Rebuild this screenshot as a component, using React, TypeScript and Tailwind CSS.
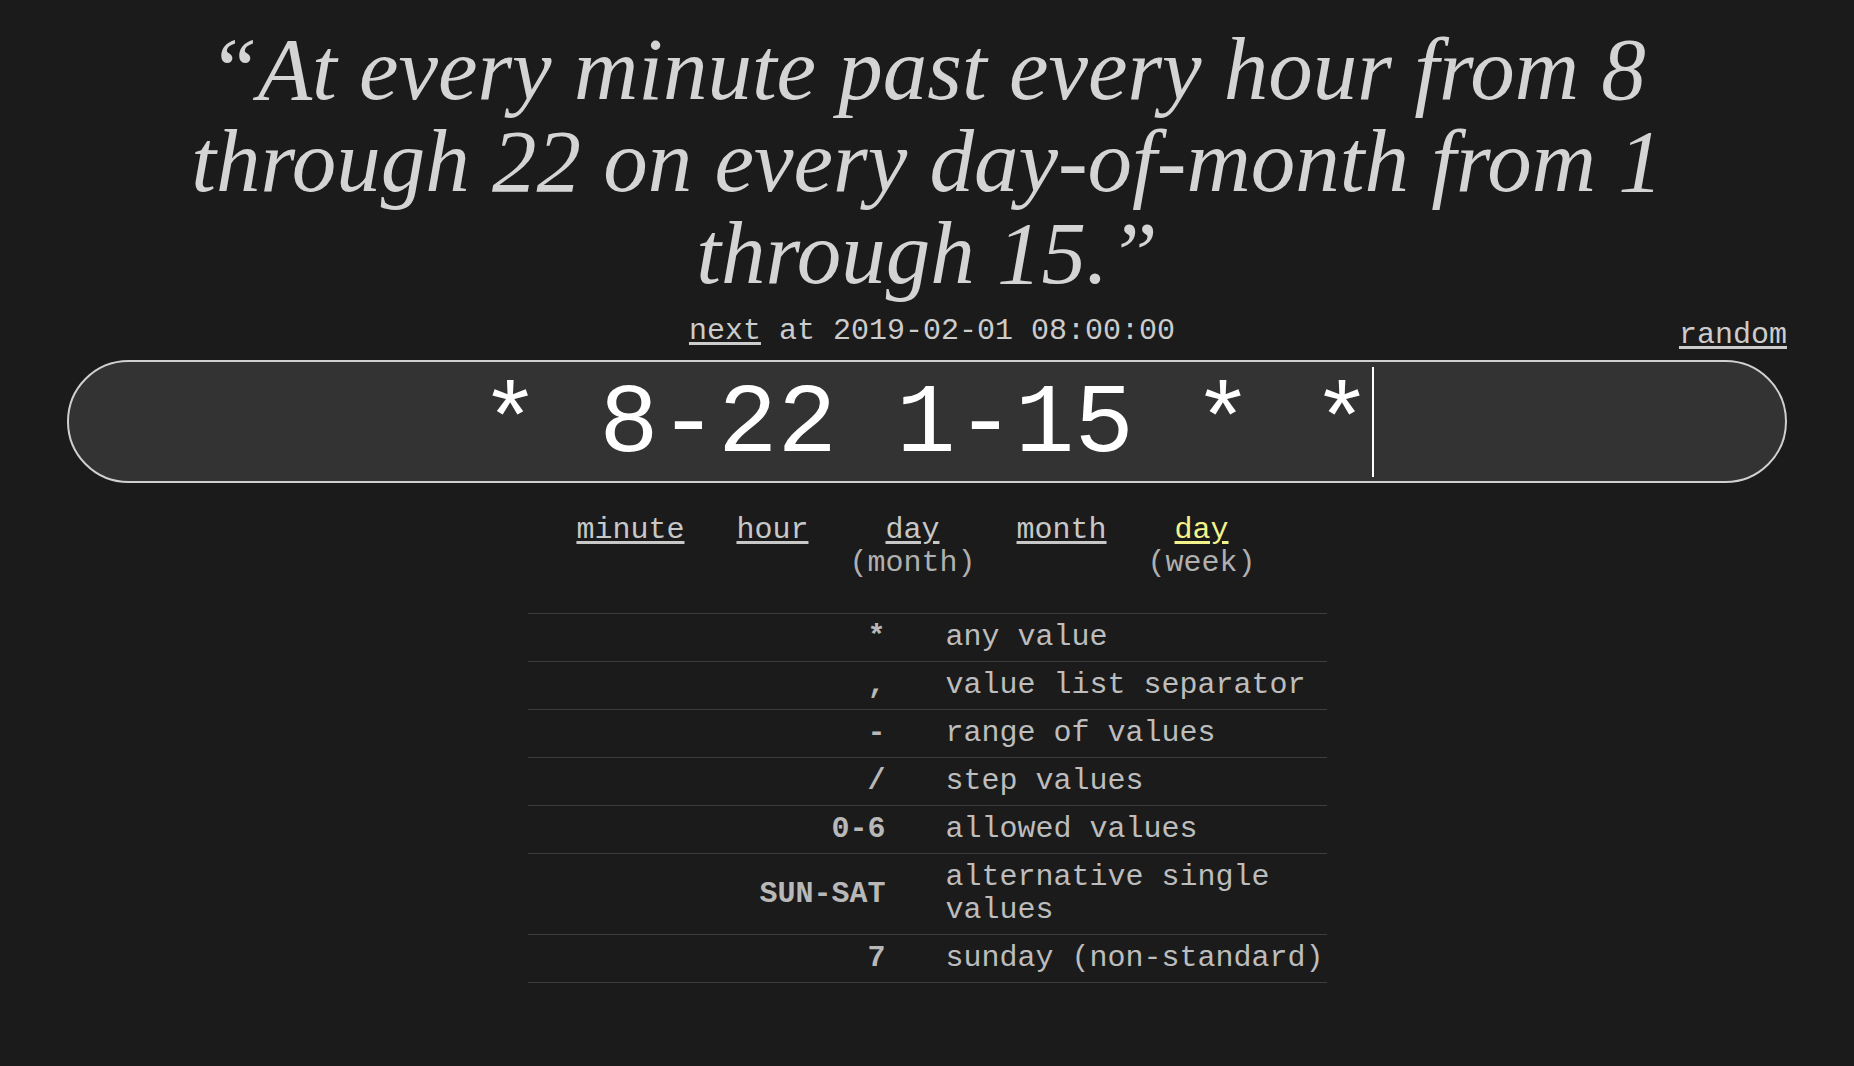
import React from 'react';

const rows: { sym: string; desc: string }[] = [
  { sym: '*', desc: 'any value' },
  { sym: ',', desc: 'value list separator' },
  { sym: '-', desc: 'range of values' },
  { sym: '/', desc: 'step values' },
  { sym: '0-6', desc: 'allowed values' },
  { sym: 'SUN-SAT', desc: 'alternative single values' },
  { sym: '7', desc: 'sunday (non-standard)' },
];

const App: React.FC = () => {
  return (
    <div className="min-h-screen bg-[#1b1b1b] text-[#c4c4c4] font-['Liberation_Mono',monospace]">
      <div className="mx-auto w-[1720px] pt-[23px]">
        {/* Human readable description */}
        <h1 className="px-[40px] text-center font-['Liberation_Serif',serif] text-[89px] font-normal italic leading-[92px] text-[#d4d4d4]">
          “At every minute past every hour from 8 through 22 on every day-of-month from 1 through 15.”
        </h1>

        {/* Next date + random */}
        <div className="mt-[16px] grid grid-cols-[1fr_auto_1fr] text-[30px] leading-[33px] text-[#cccccc]">
          <div />
          <div className="pl-[10px]">
            <span className="underline underline-offset-[3px]">next</span> at 2019-02-01 08:00:00
          </div>
          <div className="justify-self-end pt-[4px]">
            <span className="underline underline-offset-[3px]">random</span>
          </div>
        </div>

        {/* Expression input */}
        <div className="mt-[8px] flex h-[123px] items-center justify-center rounded-full border-2 border-[#d0d0d0] bg-[#333333] pt-[8px] text-[99px] leading-none text-white">
          <span className="whitespace-pre">* 8-22 1-15 * *</span>
          <span className="inline-block h-[110px] w-0 -translate-y-[4px] border-l-2 border-white" />
        </div>

        {/* Field labels */}
        <div className="mt-[31px] flex justify-center pr-[22px] text-[30px] leading-[33px]">
          <div className="flex gap-[41px]">
            <div className="mr-[11px] flex flex-col items-center">
              <span className="underline underline-offset-[3px] text-[#c8c8c8]">minute</span>
            </div>
            <div className="flex flex-col items-center">
              <span className="underline underline-offset-[3px] text-[#c8c8c8]">hour</span>
            </div>
            <div className="flex flex-col items-center">
              <span className="underline underline-offset-[3px] text-[#c8c8c8]">day</span>
              <span className="text-[#b0b0b0]">(month)</span>
            </div>
            <div className="flex flex-col items-center">
              <span className="underline underline-offset-[3px] text-[#c8c8c8]">month</span>
            </div>
            <div className="flex flex-col items-center">
              <span className="underline underline-offset-[3px] text-[#f3f38c]">day</span>
              <span className="text-[#b0b0b0]">(week)</span>
            </div>
          </div>
        </div>

        {/* Reference table */}
        <table className="mx-auto mt-[33px] w-[799px] table-fixed border-collapse border-t border-[#3c3c3c] text-[30px] leading-[33px]">
          <colgroup>
            <col className="w-[390px]" />
            <col className="w-[409px]" />
          </colgroup>
          <tbody>
            {rows.map((r) => (
              <tr key={r.sym} className="border-b border-[#3c3c3c]">
                <td className="py-[7px] pr-[32px] text-right align-middle font-bold text-[#b8b8b8]">{r.sym}</td>
                <td className="py-[7px] pl-[28px] align-middle text-[#bdbdbd]">{r.desc}</td>
              </tr>
            ))}
          </tbody>
        </table>
      </div>
    </div>
  );
};

export default App;
